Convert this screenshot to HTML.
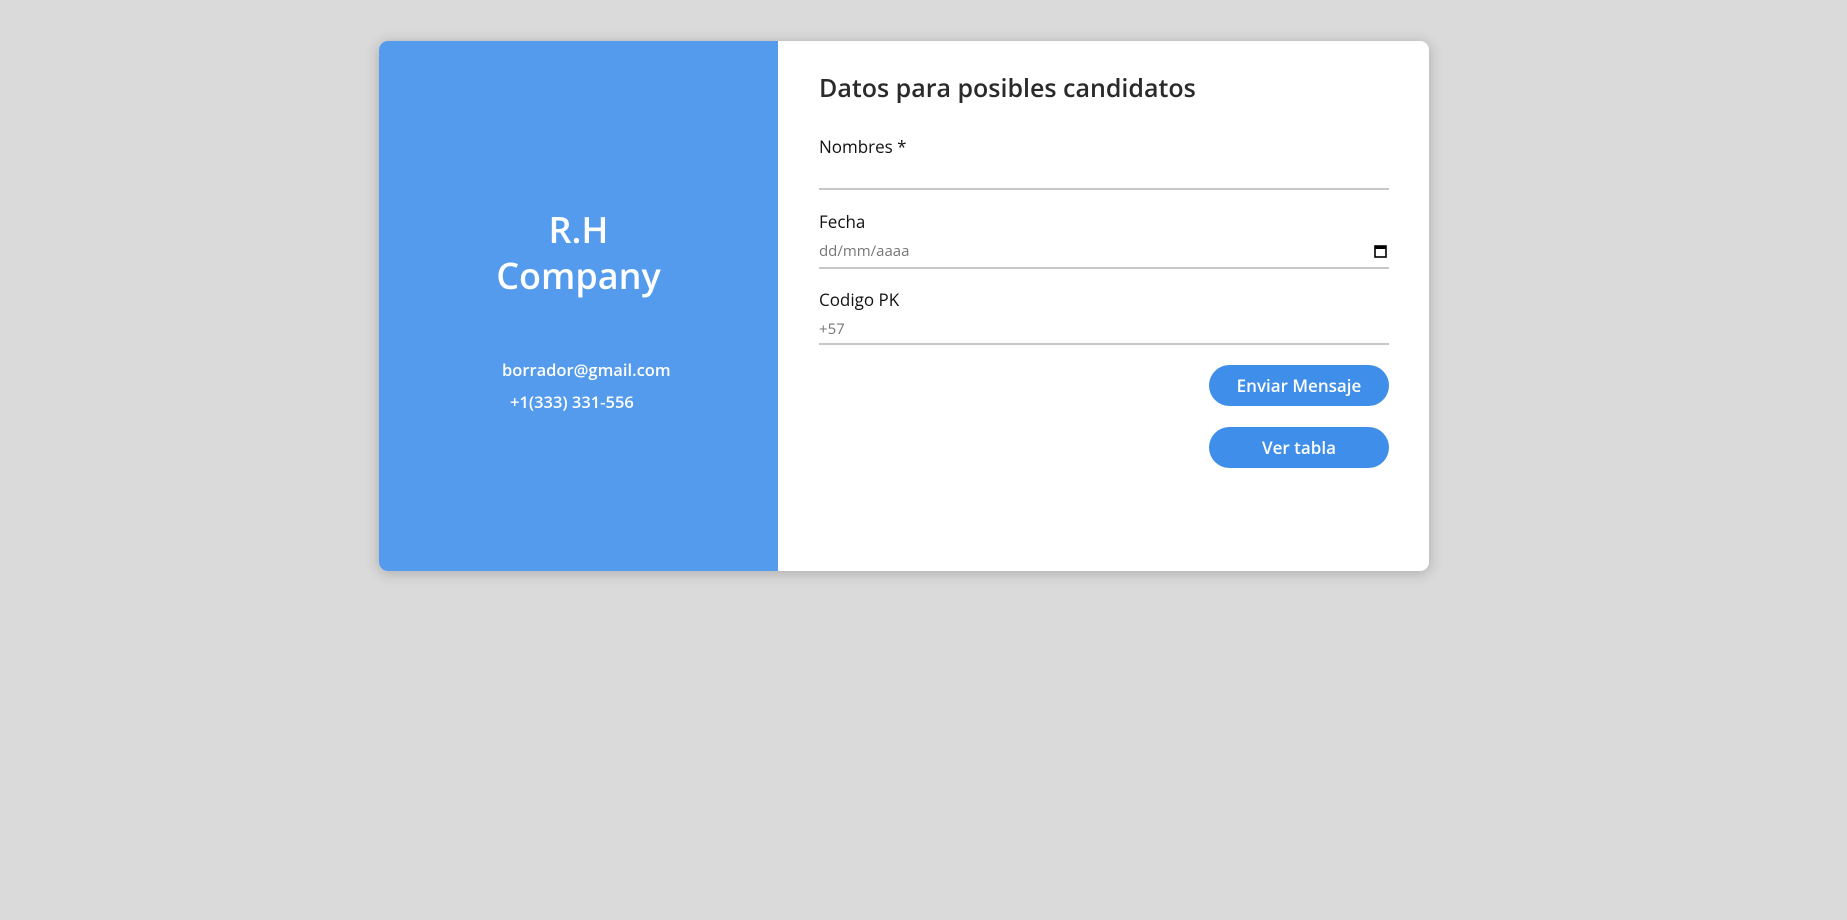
<!DOCTYPE html>
<html><head><meta charset="utf-8"><style>
html,body{margin:0;padding:0;width:1847px;height:920px;background:#dadada;font-family:"Open Sans","Liberation Sans",sans-serif;overflow:hidden}
.card{position:absolute;left:379px;top:41px;width:1050px;height:530px;background:#fff;border-radius:9px;box-shadow:0 2px 14px rgba(0,0,0,.22);overflow:hidden}
.left{position:absolute;left:0;top:0;width:399px;height:530px;background:#549bed;color:#fff}
.t{position:absolute;width:399px;text-align:center;font-weight:600;font-size:36px;line-height:44px}
.s{position:absolute;font-weight:600;font-size:16.5px;white-space:nowrap}
.r{position:absolute;color:#222}
.lbl{position:absolute;left:440px;font-size:17px;font-weight:500;color:#111}
.line{position:absolute;left:440px;width:570px;height:2px;background:#c8c8c8}
.ph{position:absolute;left:440px;font-size:15px;color:#777}
.btn{position:absolute;left:830px;width:180px;height:41px;border-radius:21px;background:#3f8ee9;color:#fff;font-weight:600;font-size:17px;text-align:center;line-height:41px}
</style></head><body>
<div class="card">
<div class="left">
<div class="t" style="top:167px">R.H</div>
<div class="t" style="top:213px">Company</div>
<div class="s" style="left:123px;top:317px">borrador@gmail.com</div>
<div class="s" style="left:131px;top:349px">+1(333) 331-556</div>
</div>
<div class="r" style="left:440px;top:30px;font-size:25px;font-weight:600;color:#2a2a2a">Datos para posibles candidatos</div>
<div class="lbl" style="top:94px">Nombres *</div>
<div class="line" style="top:147px"></div>
<div class="lbl" style="top:169px">Fecha</div>
<div class="ph" style="top:200px">dd/mm/aaaa</div>
<svg style="position:absolute;left:995px;top:203px" width="13" height="14" viewBox="0 0 13 14"><rect x="1" y="2" width="11" height="11" fill="none" stroke="#000" stroke-width="1.6"/><rect x="1" y="2" width="11" height="3" fill="#000"/></svg>
<div class="line" style="top:226px"></div>
<div class="lbl" style="top:247px">Codigo PK</div>
<div class="ph" style="top:278px">+57</div>
<div class="line" style="top:302px"></div>
<div class="btn" style="top:324px">Enviar Mensaje</div>
<div class="btn" style="top:386px">Ver tabla</div>
</div>
</body></html>
